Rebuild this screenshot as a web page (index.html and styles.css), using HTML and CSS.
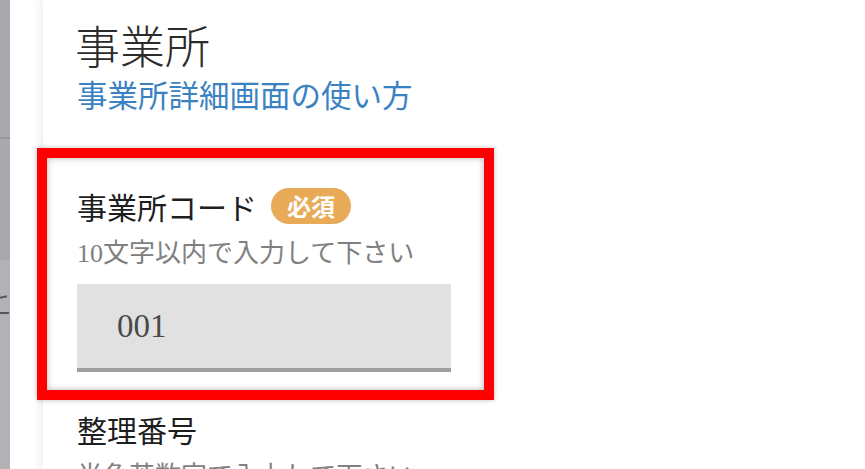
FILE: index.html
```html
<!DOCTYPE html>
<html lang="ja">
<head>
<meta charset="utf-8">
<title>事業所</title>
<link rel="stylesheet" href="styles.css">
</head>
<body>
<div class="layout">
  <aside class="sidebar">
    <div class="sidebar-top"></div>
    <div class="sidebar-mid"></div>
    <div class="sidebar-bottom">
      <span class="mark mark-1"></span>
      <span class="mark mark-2"></span>
    </div>
  </aside>
  <main class="panel">
    <h1 class="title">事業所</h1>
    <a class="help-link" href="#">事業所詳細画面の使い方</a>

    <section class="field field-highlighted">
      <div class="highlight"></div>
      <div class="label-row">
        <span class="label">事業所コード</span>
        <span class="badge">必須</span>
      </div>
      <p class="hint">10文字以内で入力して下さい</p>
      <div class="input">001</div>
    </section>

    <section class="field">
      <div class="label-row">
        <span class="label">整理番号</span>
      </div>
      <p class="hint">半角英数字で入力して下さい</p>
    </section>
  </main>
</div>
</body>
</html>
```

FILE: styles.css
```css
* { box-sizing: border-box; }

html, body {
  margin: 0;
  padding: 0;
  width: 865px;
  height: 469px;
  overflow: hidden;
  background: #ffffff;
  font-family: "Liberation Serif", "Noto Sans CJK JP", serif;
  color: #333333;
}

.layout {
  display: flex;
  height: 469px;
}

.sidebar {
  width: 10px;
  flex: 0 0 10px;
  display: flex;
  flex-direction: column;
}

.sidebar-top {
  height: 139px;
  background: #a9a9ad;
  border-bottom: 2px solid #98989c;
}

.sidebar-mid {
  height: 121px;
  background: #a9a9ad;
}

.sidebar-bottom {
  flex: 1;
  background: #b2b2b6;
  display: flex;
  flex-direction: column;
  padding-top: 36px;
  gap: 14px;
}

.mark {
  display: block;
  height: 2px;
  background: #55555a;
}
.mark-1 { width: 7px; transform: rotate(-12deg); }
.mark-2 { width: 9px; }

.panel {
  flex: 1;
  margin-left: 33px;
  padding: 22px 0 0 34px;
  background: #ffffff;
  box-shadow: -3px 0 8px rgba(0, 0, 0, 0.07);
}

.title {
  margin: 0 0 0 -2px;
  font-family: "Noto Sans CJK JP", sans-serif;
  font-size: 45px;
  line-height: 45px;
  font-weight: 200;
  color: #2b2b2b;
}

.help-link {
  display: block;
  margin-top: 12px;
  font-family: "Noto Sans CJK JP", sans-serif;
  font-size: 30.5px;
  line-height: 30px;
  font-weight: 400;
  color: #3b82c2;
  text-decoration: none;
}

.field {
  position: relative;
  width: 374px;
}

.field-highlighted {
  margin-top: 39px;
  padding: 40px 0 28px;
}

.highlight {
  position: absolute;
  left: -40px;
  top: 0;
  width: 457px;
  height: 252px;
  border: 10px solid #ff0000;
  box-shadow: 0 0 5px rgba(0, 0, 0, 0.25), inset 0 0 6px rgba(0, 0, 0, 0.3);
  pointer-events: none;
}

.label-row {
  display: flex;
  align-items: center;
  height: 36px;
  gap: 14px;
}

.label {
  font-family: "Noto Sans CJK JP", sans-serif;
  font-size: 30px;
  line-height: 30px;
  font-weight: 400;
  color: #1e1e1e;
}

.badge {
  display: inline-flex;
  align-items: center;
  justify-content: center;
  height: 36px;
  padding: 0 16px;
  border-radius: 18px;
  background: #e9aa58;
  color: #ffffff;
  font-family: "Noto Sans CJK JP", sans-serif;
  font-size: 24px;
  font-weight: 700;
  line-height: 24px;
}

.hint {
  margin: 17px 0 0;
  font-size: 26px;
  line-height: 26px;
  color: #808080;
  white-space: nowrap;
}

.input {
  margin-top: 17px;
  height: 88px;
  padding: 0 0 0 40px;
  display: flex;
  align-items: center;
  background: #e1e1e1;
  border-bottom: 4px solid #9e9e9e;
  font-size: 33px;
  color: #4a4a4a;
}

.field + .field {
  margin-top: 14px;
}

.field + .field .label-row {
  height: 30px;
}

.field + .field .hint {
  margin-top: 20px;
}
```
